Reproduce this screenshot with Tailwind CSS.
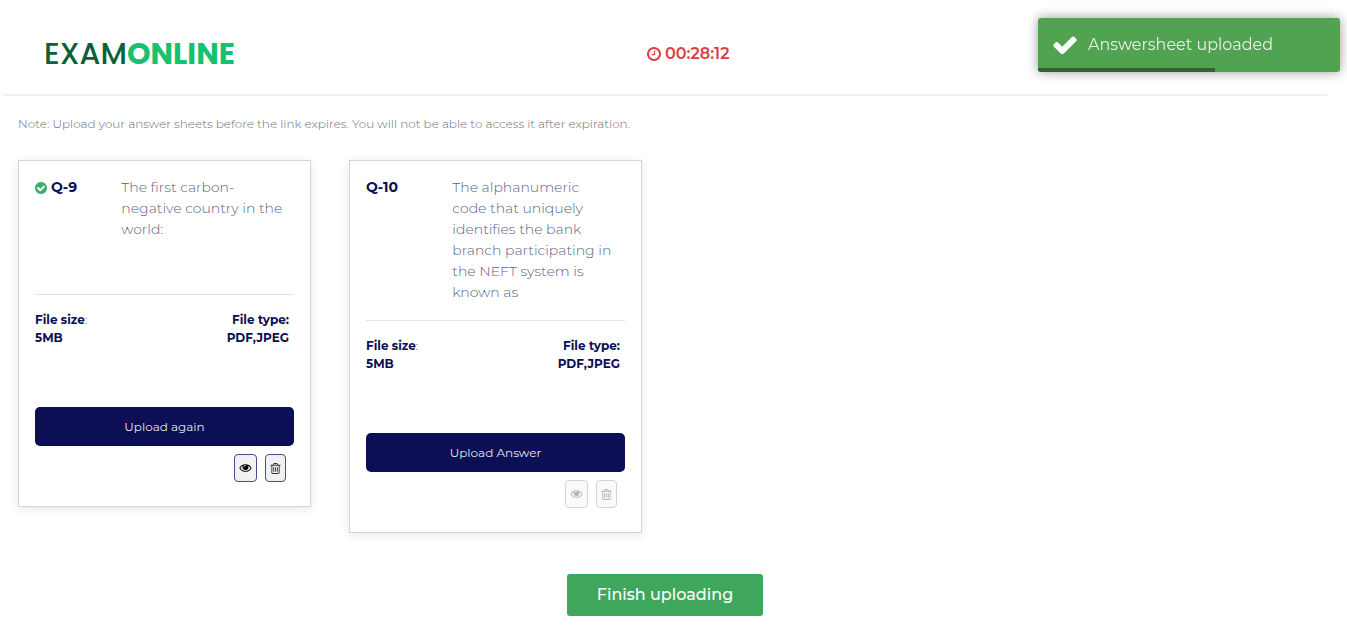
<!DOCTYPE html>
<html lang="en">
<head>
    <meta charset="UTF-8">
    <meta name="viewport" content="width=device-width, initial-scale=1.0">
    <title>ExamOnline - Upload answers</title>
    <script src="https://cdn.jsdelivr.net/npm/@tailwindcss/browser@4"></script>
</head>
<body class="bg-white font-['Montserrat','Inter',sans-serif] text-[#0c0f54]">

    <!-- Icons -->
    <svg class="hidden">
        <symbol id="icon-clock" viewBox="128 128 1536 1536"><path d="M1024 544v448q0 14-9 23t-23 9h-320q-14 0-23-9t-9-23v-64q0-14 9-23t23-9h224v-352q0-14 9-23t23-9h64q14 0 23 9t9 23zm416 352q0-148-73-273t-198-198-273-73-273 73-198 198-73 273 73 273 198 198 273 73 273-73 198-198 73-273zm224 0q0 209-103 385.5t-279.5 279.5-385.5 103-385.5-103-279.5-279.5-103-385.5 103-385.5 279.5-279.5 385.5-103 385.5 103 279.5 279.5 103 385.5z"/></symbol>
        <symbol id="icon-check" viewBox="121 306 1550 1188"><path d="M1671 566q0 40-28 68l-724 724-136 136q-28 28-68 28t-68-28l-136-136-362-362q-28-28-28-68t28-68l136-136q28-28 68-28t68 28l294 295 656-657q28-28 68-28t68 28l136 136q28 28 28 68z"/></symbol>
        <symbol id="icon-check-circle" viewBox="128 128 1536 1536"><path d="M1412 734q0-28-18-46l-91-90q-19-19-45-19t-45 19l-408 407-226-226q-19-19-45-19t-45 19l-91 90q-18 18-18 46 0 27 18 45l362 362q19 19 45 19 27 0 46-19l543-543q18-18 18-45zm252 162q0 209-103 385.5t-279.5 279.5-385.5 103-385.5-103-279.5-279.5-103-385.5 103-385.5 279.5-279.5 385.5-103 385.5 103 279.5 279.5 103 385.5z"/></symbol>
        <symbol id="icon-eye" viewBox="0 64 1792 1792"><path d="M1664 960q-152-236-381-353 61 104 61 225 0 185-131.5 316.5t-316.5 131.5-316.5-131.5-131.5-316.5q0-121 61-225-229 117-381 353 133 205 333.5 326.5t434.5 121.5 434.5-121.5 333.5-326.5zm-720-384q0-20-14-34t-34-14q-125 0-214.5 89.5t-89.5 214.5q0 20 14 34t34 14 34-14 14-34q0-86 61-147t147-61q20 0 34-14t14-34zm848 384q0 34-20 69-140 230-376.5 368.5t-499.5 138.5-499.5-139-376.5-368q-20-35-20-69t20-69q140-229 376.5-368t499.5-139 499.5 139 376.5 368q20 35 20 69z"/></symbol>
        <symbol id="icon-trash" viewBox="192 128 1408 1536"><path d="M704 736v576q0 14-9 23t-23 9h-64q-14 0-23-9t-9-23v-576q0-14 9-23t23-9h64q14 0 23 9t9 23zm256 0v576q0 14-9 23t-23 9h-64q-14 0-23-9t-9-23v-576q0-14 9-23t23-9h64q14 0 23 9t9 23zm256 0v576q0 14-9 23t-23 9h-64q-14 0-23-9t-9-23v-576q0-14 9-23t23-9h64q14 0 23 9t9 23zm128 724v-948h-896v948q0 22 7 40.5t14.5 27 10.5 8.5h832q3 0 10.5-8.5t14.5-27 7-40.5zm-672-1076h448l-48-117q-7-9-17-11h-317q-10 2-17 11zm928 32v64q0 14-9 23t-23 9h-96v948q0 83-47 143.5t-113 60.5h-832q-66 0-113-58.5t-47-141.5v-952h-96q-14 0-23-9t-9-23v-64q0-14 9-23t23-9h309l70-167q15-37 54-63t79-26h320q40 0 79 26t54 63l70 167h309q14 0 23 9t9 23z"/></symbol>
    </svg>

    <div class="pl-[3px] pr-5">

        <!-- Header -->
        <header class="grid grid-cols-[47%_1fr] items-center border-b-2 border-[#f0f0f0] pt-[33px] pb-[19px] pl-[41px]">
            <h1 class="text-[30px] leading-[42px] font-medium font-['Poppins','Lato',sans-serif] text-[#0a6038]">EXAM<span class="font-bold text-[#16c172]">ONLINE</span></h1>
            <div class="flex items-center gap-1 text-base font-semibold text-[#d9403f]">
                <svg class="size-[14px] fill-current"><use href="#icon-clock"/></svg>
                <span id="timer">00:28:12</span>
            </div>
        </header>

        <main class="pl-[15px]">
            <p class="mt-[19px] text-xs leading-[18px] font-light text-[#6c6c6c]">Note: Upload your answer sheets before the link expires. You will not be able to access it after expiration.</p>

            <div class="mt-[27px] mr-[23px] grid grid-cols-4 items-start gap-[38px]">

                <!-- Question 9 -->
                <section class="border border-[#d4d4d4] p-4 pb-6 shadow-[0_2px_10px_rgba(0,0,0,0.1)]">
                    <div class="grid min-h-[100px] grid-cols-3 text-sm leading-[21px]">
                        <h2 class="flex h-[21px] items-center gap-1 font-bold">
                            <svg class="size-3 fill-[#3fab6c]"><use href="#icon-check-circle"/></svg>
                            Q-9
                        </h2>
                        <p class="col-span-2 pr-[10px] font-light text-[#5c5f80]">The first carbon-negative country in the world:</p>
                    </div>
                    <hr class="mt-[17px] mb-4 border-[#e2e2e2]">
                    <div class="flex justify-between pr-[5px] text-xs leading-[18px] font-bold">
                        <p>File size<span class="font-light">:</span><br>5MB</p>
                        <p class="text-right">File type:<br>PDF,JPEG</p>
                    </div>
                    <button class="mt-[60px] w-full rounded-[5px] bg-[#0c0f54] py-[10px] text-xs leading-[19px] text-[#e4e4ee] hover:bg-[#171b70]">Upload again</button>
                    <div class="mt-2 flex justify-end gap-2 pr-2">
                        <button aria-label="View answer" class="flex h-7 items-center rounded border border-[#4a4c88] bg-[#f1f1f1] px-1 text-black"><svg class="h-3 w-[13px] fill-current"><use href="#icon-eye"/></svg></button>
                        <button aria-label="Delete answer" class="flex h-7 items-center rounded border border-[#4a4c88] bg-[#f1f1f1] px-1 text-[#333]"><svg class="h-[11px] w-[11px] fill-current"><use href="#icon-trash"/></svg></button>
                    </div>
                </section>

                <!-- Question 10 -->
                <section class="border border-[#d4d4d4] p-4 pb-6 shadow-[0_2px_10px_rgba(0,0,0,0.1)]">
                    <div class="grid min-h-[100px] grid-cols-3 text-sm leading-[21px]">
                        <h2 class="flex h-[21px] items-center gap-1 font-bold">Q-10</h2>
                        <p class="col-span-2 pr-[10px] font-light text-[#5c5f80]">The alphanumeric code that uniquely identifies the bank branch participating in the NEFT system is known as</p>
                    </div>
                    <hr class="mt-[17px] mb-4 border-[#e2e2e2]">
                    <div class="flex justify-between pr-[5px] text-xs leading-[18px] font-bold">
                        <p>File size<span class="font-light">:</span><br>5MB</p>
                        <p class="text-right">File type:<br>PDF,JPEG</p>
                    </div>
                    <button class="mt-[60px] w-full rounded-[5px] bg-[#0c0f54] py-[10px] text-xs leading-[19px] text-[#e4e4ee] hover:bg-[#171b70]">Upload Answer</button>
                    <div class="mt-2 flex justify-end gap-2 pr-2">
                        <button disabled aria-label="View answer" class="flex h-7 items-center rounded border border-[#d3d3df] bg-[#fafafa] px-1 text-[#b5b5b5]"><svg class="h-3 w-[13px] fill-current"><use href="#icon-eye"/></svg></button>
                        <button disabled aria-label="Delete answer" class="flex h-7 items-center rounded border border-[#d3d3df] bg-[#fafafa] px-1 text-[#b5b5b5]"><svg class="h-[11px] w-[11px] fill-current"><use href="#icon-trash"/></svg></button>
                    </div>
                </section>
            </div>
        </main>

        <div class="mt-[41px] flex justify-center">
            <button class="rounded-[3px] bg-[#3fa75c] px-[30px] py-[9px] text-base font-medium text-white hover:bg-[#36934f]">Finish uploading</button>
        </div>
    </div>

    <!-- Toast -->
    <div role="status" class="fixed top-[18px] right-[7px] flex h-[54px] w-[302px] items-center gap-[11px] overflow-hidden rounded-[3px] bg-[#51a351] px-[15px] text-base text-[#e3f1e3] shadow-[0_0_12px_#999]">
        <svg class="h-[18px] w-6 fill-white"><use href="#icon-check"/></svg>
        Answersheet uploaded
        <div class="absolute bottom-0 left-0 h-1 w-[177px] bg-[#316231]"></div>
    </div>

</body>
</html>
